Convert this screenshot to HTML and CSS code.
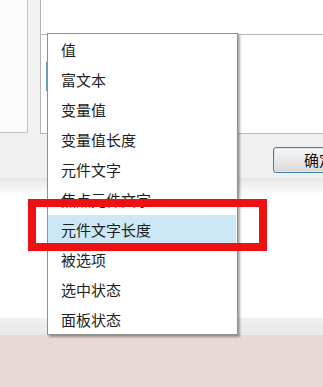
FILE: index.html
```html
<!DOCTYPE html>
<html lang="zh-CN">
<head>
<meta charset="utf-8">
<title>菜单</title>
<link rel="stylesheet" href="styles.css">
</head>
<body>
<div class="screen">
  <div class="dialog">
    <div class="list"></div>
    <div class="gutter"></div>
    <div class="main">
      <div class="textarea"></div>
      <div class="body"><div class="field"></div></div>
    </div>
  </div>
  <div class="footer">
    <button class="btn">确定</button>
  </div>
  <div class="shade"></div>
  <div class="blank"></div>
  <div class="band"></div>
  <div class="desk"></div>

  <ul class="menu">
    <li class="item">值</li>
    <li class="item">富文本</li>
    <li class="item">变量值</li>
    <li class="item">变量值长度</li>
    <li class="item">元件文字</li>
    <li class="item">焦点元件文字</li>
    <li class="item active">元件文字长度</li>
    <li class="item">被选项</li>
    <li class="item">选中状态</li>
    <li class="item">面板状态</li>
  </ul>
  <div class="mark"></div>
</div>
</body>
</html>
```

FILE: styles.css
```css
html, body {
  margin: 0;
  padding: 0;
  background: #ffffff;
}
.screen {
  position: relative;
  width: 323px;
  height: 387px;
  overflow: hidden;
  display: flex;
  flex-direction: column;
  font-family: "Noto Sans CJK SC", "Noto Sans", sans-serif;
}
.dialog {
  display: flex;
  height: 134px;
  flex: none;
  background: #f0f0f0;
}
.list {
  width: 27px;
  height: 133px;
  background: #fcfcfc;
  border-right: 1px solid #c4c4c4;
  border-bottom: 1px solid #c4c4c4;
  box-sizing: border-box;
  width: 28px;
}
.gutter {
  width: 12px;
  background: #f1f1f1;
}
.main {
  flex: 1;
  display: flex;
  flex-direction: column;
  border-left: 1px solid #b4b4b4;
  border-bottom: 1px solid #b9b9b9;
  background: #ffffff;
}
.textarea {
  height: 35px;
  border-bottom: 1px solid #b5b5b5;
  box-sizing: border-box;
}
.body {
  flex: 1;
  padding: 27px 0 0 5px;
}
.field {
  height: 29px;
  border-left: 2px solid #6a9fb1;
}
.footer {
  height: 44px;
  flex: none;
  background: #f0f0f0;
  padding: 13px 0 0 273px;
  box-sizing: border-box;
}
.btn {
  width: 80px;
  height: 26px;
  border: 1px solid #3f7fae;
  border-radius: 3px;
  background: linear-gradient(#f6f6f6, #e9e9e9 50%, #d9d9d9);
  font-family: "Noto Sans CJK SC", sans-serif;
  font-size: 15px;
  color: #111;
  text-align: left;
  padding: 0 0 0 30px;
  line-height: 22px;
  box-shadow: inset 0 0 0 1px #d6e8f3;
}
.shade {
  height: 18px;
  flex: none;
  background: linear-gradient(#e6e6e6, #ffffff);
}
.blank {
  height: 122px;
  flex: none;
  background: #ffffff;
}
.band {
  height: 17px;
  flex: none;
  background: linear-gradient(#efefef, #e9e9e9);
  border-bottom: 1px solid #dcdcdc;
}
.desk {
  flex: 1;
  background: #e7dad6;
}
.menu {
  position: absolute;
  left: 47px;
  top: 33px;
  width: 191px;
  margin: 0;
  padding: 1px 0 0;
  list-style: none;
  background: #ffffff;
  border: 1px solid #909090;
  box-sizing: border-box;
  height: 302px;
  box-shadow: 2px 2px 2px rgba(0, 0, 0, 0.35);
}
.item {
  height: 30px;
  line-height: 30px;
  padding-left: 13px;
  font-size: 15px;
  color: #1e1e1e;
  margin-right: 1px;
}
.item.active {
  background: #cce8f6;
}
.mark {
  position: absolute;
  left: 28px;
  top: 199px;
  width: 239px;
  height: 52px;
  border: 8px solid #ee1111;
  box-sizing: border-box;
}
```
